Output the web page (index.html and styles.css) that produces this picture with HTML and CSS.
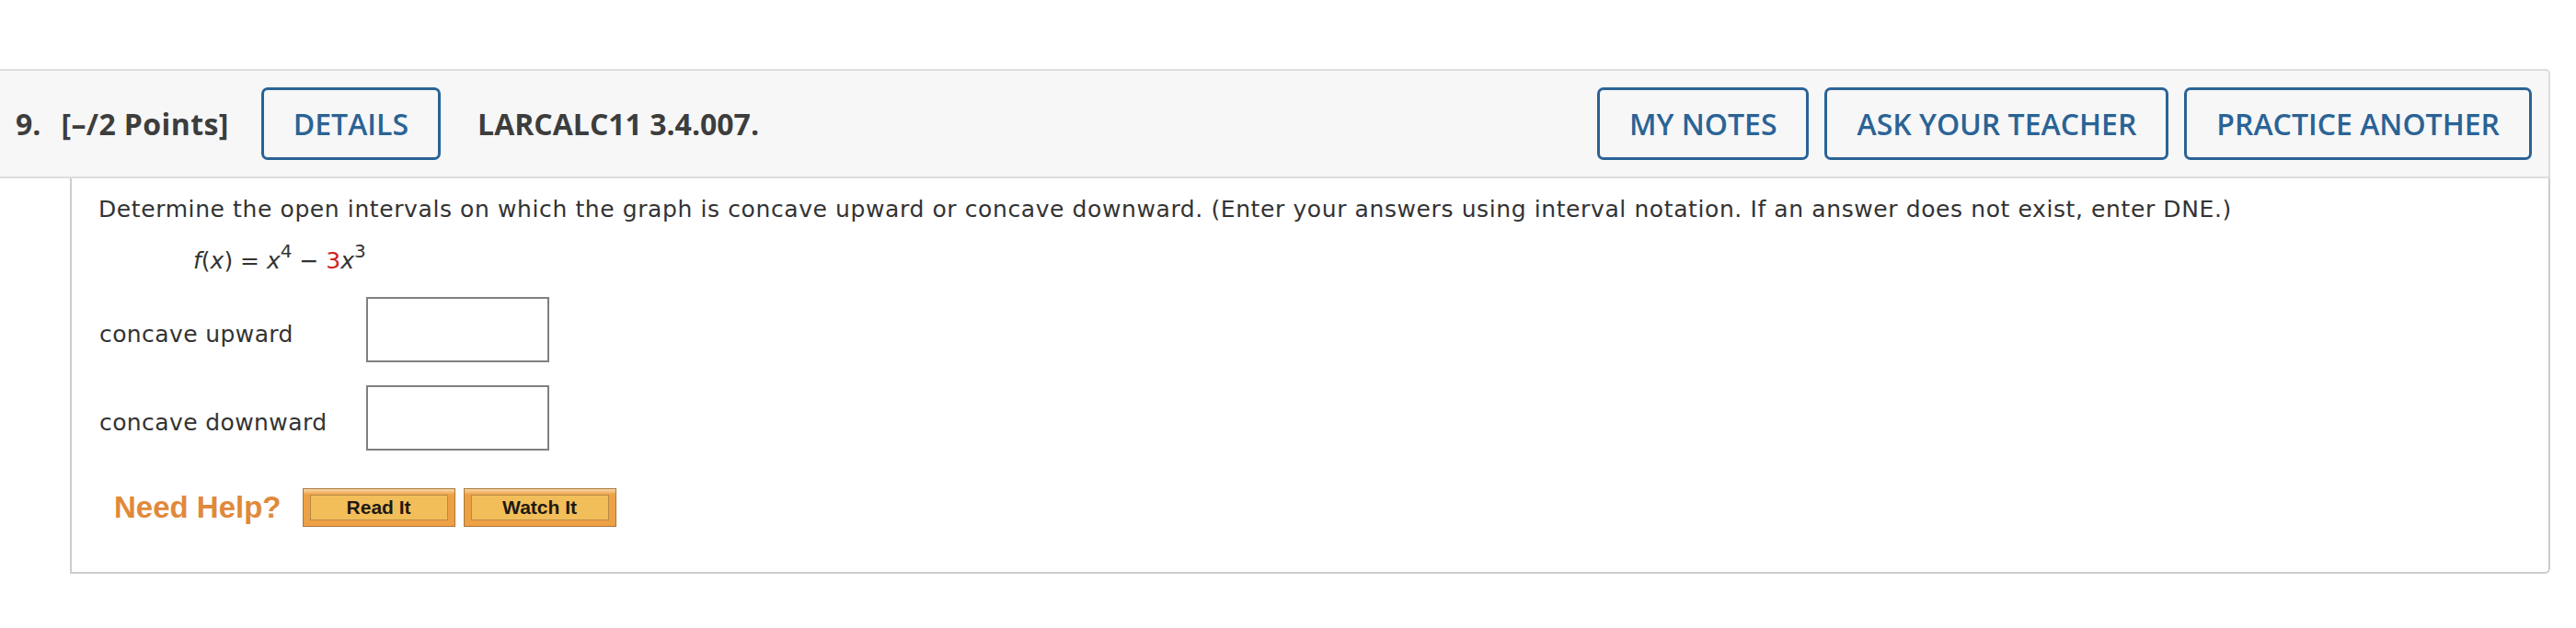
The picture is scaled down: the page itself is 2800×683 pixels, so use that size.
FILE: index.html
```html
<!DOCTYPE html>
<html>
<head>
<meta charset="utf-8">
<link rel="stylesheet" href="styles.css">
</head>
<body>
<div class="page">
  <div class="question">
    <div class="q-header">
      <span class="q-num">9.</span>
      <span class="q-points">[–/2 Points]</span>
      <button class="btn btn-details">DETAILS</button>
      <span class="q-code">LARCALC11 3.4.007.</span>
      <div class="q-actions">
        <button class="btn">MY NOTES</button>
        <button class="btn">ASK YOUR TEACHER</button>
        <button class="btn">PRACTICE ANOTHER</button>
      </div>
    </div>
    <div class="q-body">
      <p class="prompt">Determine the open intervals on which the graph is concave upward or concave downward. (Enter your answers using interval notation. If an answer does not exist, enter DNE.)</p>
      <p class="formula"><i>f</i>(<i>x</i>) = <i>x</i><sup>4</sup> − <span class="red">3</span><i>x</i><sup>3</sup></p>
      <div class="answer-row">
        <span class="label">concave upward</span>
        <input class="answer" type="text">
      </div>
      <div class="answer-row">
        <span class="label">concave downward</span>
        <input class="answer" type="text">
      </div>
      <div class="help">
        <span class="help-title">Need Help?</span>
        <span class="help-btn"><span class="help-inner">Read It</span></span>
        <span class="help-btn"><span class="help-inner">Watch It</span></span>
      </div>
    </div>
  </div>
</div>
</body>
</html>
```
FILE: styles.css
```css
html, body {
  margin: 0;
  padding: 0;
  background: #ffffff;
}

.page {
  padding-top: 75px;
  width: 2772px;
}

.question {
  display: flex;
  flex-direction: column;
}

.q-header {
  display: flex;
  align-items: center;
  height: 115px;
  padding: 0 18px 0 17px;
  background: #f7f7f7;
  border-top: 2px solid #dddddd;
  border-bottom: 2px solid #dddddd;
  border-right: 2px solid #dddddd;
  border-top-right-radius: 5px;
  font-family: "Open Sans", sans-serif;
  color: #3d3d3d;
}

.q-num {
  font-weight: 700;
  font-size: 32px;
}

.q-points {
  font-weight: 700;
  font-size: 32px;
  margin-left: 22px;
  letter-spacing: 0.4px;
}

.q-code {
  font-weight: 700;
  font-size: 32px;
  margin-left: 40px;
}

.btn {
  height: 79px;
  padding: 0 32px;
  background: #f7f7f7;
  border: 3px solid #2a6395;
  border-radius: 7px;
  color: #2a6395;
  font-family: "Open Sans", sans-serif;
  font-weight: 600;
  font-size: 32px;
  line-height: 1;
}

.btn-details {
  margin-left: 35px;
}

.q-actions {
  margin-left: auto;
  display: flex;
  gap: 17px;
}

.q-body {
  margin-left: 76px;
  padding: 16px 28px 49px 29px;
  border-left: 2px solid #cccccc;
  border-right: 2px solid #cccccc;
  border-bottom: 2px solid #cccccc;
  border-bottom-right-radius: 6px;
  font-family: "DejaVu Sans", Verdana, sans-serif;
  font-size: 25px;
  letter-spacing: 0.6px;
  color: #333333;
}

.prompt {
  margin: 0;
  line-height: 36px;
}

.formula {
  margin: 20px 0 0 103px;
  line-height: 36px;
  letter-spacing: 0;
}

.formula sup {
  font-size: 20px;
  line-height: 0;
  vertical-align: 12px;
}

.red {
  color: #cc2222;
}

.answer-row {
  display: flex;
  align-items: center;
  margin-top: 21px;
}

.answer-row + .answer-row {
  margin-top: 25px;
}

.label {
  width: 290px;
  padding-left: 1px;
  margin-top: 10px;
  letter-spacing: 0.4px;
}

.answer {
  box-sizing: border-box;
  width: 199px;
  height: 71px;
  margin: 0;
  border: 2px solid #808080;
  background: #ffffff;
}

.help {
  display: flex;
  align-items: center;
  margin-top: 41px;
  padding-left: 17px;
}

.help-title {
  font-family: "Liberation Sans", Arial, sans-serif;
  font-weight: 700;
  font-size: 33px;
  letter-spacing: 0;
  color: #e0893a;
  margin-right: 23px;
}

.help-btn {
  box-sizing: border-box;
  width: 166px;
  height: 42px;
  padding: 6px 7px;
  margin-right: 9px;
  display: flex;
  border: 1px solid #a8773a;
  background: linear-gradient(#f7d9a8 0px, #eea044 6px, #eea044 100%);
}

.help-inner {
  flex: 1;
  display: flex;
  align-items: center;
  justify-content: center;
  border: 1px solid #b7894a;
  background: #f2be5a;
  font-family: "Liberation Sans", Arial, sans-serif;
  font-weight: 700;
  font-size: 21px;
  letter-spacing: 0;
  color: #1e1a12;
}
```
